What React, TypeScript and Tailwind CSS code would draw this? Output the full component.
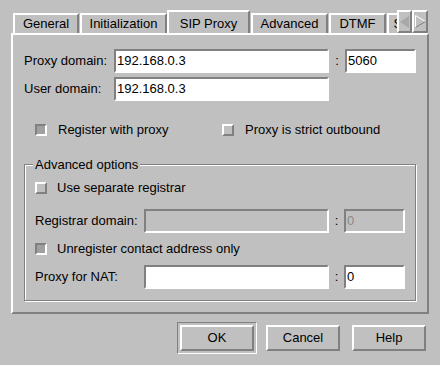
import React from "react";

const raised = "border-2 border-t-white border-l-white border-b-[#808080] border-r-[#808080]";
const sunken = "border-2 border-t-[#808080] border-l-[#808080] border-b-white border-r-white";

function Tab({ label, w, ml, selected }: { label: string; w: number; ml: number; selected?: boolean }) {
  if (selected) {
    return (
      <div
        style={{ width: w, marginLeft: ml }}
        className="relative z-10 -mb-[2px] flex h-[25px] shrink-0 items-start justify-center border-2 border-b-0 border-t-white border-l-white border-r-[#808080] bg-[#c0c0c0] pt-[2px]"
      >
        {label}
      </div>
    );
  }
  return (
    <div
      style={{ width: w, marginLeft: ml }}
      className="flex h-[20px] shrink-0 items-center justify-center overflow-hidden whitespace-nowrap border-2 border-b-0 border-t-white border-l-white border-r-[#808080] bg-[#c0c0c0]"
    >
      {label}
    </div>
  );
}

function Check({ checked }: { checked?: boolean }) {
  return (
    <div
      className={
        checked
          ? "h-[12px] w-[12px] shrink-0 border-2 border-t-[#808080] border-l-[#808080] border-b-white border-r-white bg-[#a0a0a0]"
          : "h-[12px] w-[12px] shrink-0 border-2 border-t-white border-l-white border-b-[#808080] border-r-[#808080] bg-[#c0c0c0]"
      }
    />
  );
}

function Field({ value, w, disabled }: { value: string; w: number; disabled?: boolean }) {
  return (
    <div
      style={{ width: w }}
      className={`${sunken} flex h-[24px] items-center px-[1px] ${
        disabled ? "bg-[#c0c0c0] text-[#8a8a8a]" : "bg-white text-black"
      }`}
    >
      {value}
    </div>
  );
}

function Button({ label }: { label: string }) {
  return (
    <div className={`${raised} flex h-[26px] w-[74px] items-center justify-center bg-[#c0c0c0]`}>
      {label}
    </div>
  );
}

export default function App() {
  return (
    <div
      className="relative h-[365px] w-[440px] overflow-hidden bg-[#c0c0c0] text-[13px] text-black"
      style={{ fontFamily: '"Liberation Sans", Arial, sans-serif' }}
    >
      {/* tabs, clipped where the scroll arrows begin */}
      <div className="flex h-[33px] w-[397px] items-end overflow-hidden">
        <Tab label="General" w={66} ml={13} />
        <Tab label="Initialization" w={87} ml={1} />
        <Tab label="SIP Proxy" w={83} ml={0} selected />
        <Tab label="Advanced" w={77} ml={1} />
        <Tab label="DTMF" w={57} ml={1} />
        <Tab label="Security" w={60} ml={1} />
      </div>

      {/* scroll arrows */}
      <div className="absolute left-[397px] top-[10px] z-20 flex h-[23px]">
        <div className={`${raised} flex w-[15px] items-center justify-center bg-[#c0c0c0]`}>
          <svg width="10" height="12" viewBox="0 0 10 12">
            <polygon points="9,0 9,12 0,6" fill="#a8a8a8" />
          </svg>
        </div>
        <div className={`${raised} flex w-[16px] items-center justify-center bg-[#c0c0c0]`}>
          <svg width="11" height="13" viewBox="0 0 11 13">
            <polygon points="0.5,0.5 10.5,6.5 0.5,12.5" fill="#c0c0c0" />
            <polyline points="0.5,12.5 0.5,0.5 10.5,6.5" fill="none" stroke="#fff" strokeWidth="1" />
            <polyline points="10.5,6.5 0.5,12.5" fill="none" stroke="#808080" strokeWidth="1" />
          </svg>
        </div>
      </div>

      {/* panel */}
      <div className={`${raised} ml-[11px] h-[281px] w-[418px] pl-[11px] pt-[14px]`}>
        <div className="flex h-[24px] items-center">
          <div className="w-[90px]">Proxy domain:</div>
          <Field value="192.168.0.3" w={215} />
          <div className="w-[16px] text-center">:</div>
          <Field value="5060" w={71} />
        </div>
        <div className="mt-[4px] flex h-[24px] items-center">
          <div className="w-[90px]">User domain:</div>
          <Field value="192.168.0.3" w={215} />
        </div>

        <div className="mt-[23px] flex h-[12px] items-center">
          <div className="ml-[11px] flex w-[187px] items-center gap-[11px]">
            <Check checked />
            <span>Register with proxy</span>
          </div>
          <div className="flex items-center gap-[11px]">
            <Check />
            <span>Proxy is strict outbound</span>
          </div>
        </div>

        {/* group box */}
        <div className="relative mt-[28px] h-[137px] w-[392px] border border-[#808080] pl-[10px] pt-[17px] shadow-[1px_1px_0_#fff,inset_1px_1px_0_#fff]">
          <div className="absolute -top-[8px] left-[8px] bg-[#c0c0c0] px-[2px] leading-[15px]">
            Advanced options
          </div>
          <div className="flex h-[12px] items-center gap-[10px]">
            <Check />
            <span>Use separate registrar</span>
          </div>
          <div className="mt-[15px] flex h-[24px] items-center">
            <div className="w-[109px]">Registrar domain:</div>
            <Field value="" w={185} disabled />
            <div className="w-[15px] text-center">:</div>
            <Field value="0" w={61} disabled />
          </div>
          <div className="mt-[10px] flex h-[12px] items-center gap-[10px]">
            <Check checked />
            <span>Unregister contact address only</span>
          </div>
          <div className="mt-[10px] flex h-[24px] items-center">
            <div className="w-[109px]">Proxy for NAT:</div>
            <Field value="" w={185} />
            <div className="w-[15px] text-center">:</div>
            <Field value="0" w={61} />
          </div>
        </div>
      </div>

      {/* buttons */}
      <div className="mt-[8px] flex h-[31px] items-center">
        <div className="ml-[177px] border border-t-[#808080] border-l-[#808080] border-b-white border-r-white p-[2px]">
          <Button label="OK" />
        </div>
        <div className="ml-[9px]">
          <Button label="Cancel" />
        </div>
        <div className="ml-[12px]">
          <Button label="Help" />
        </div>
      </div>
    </div>
  );
}
